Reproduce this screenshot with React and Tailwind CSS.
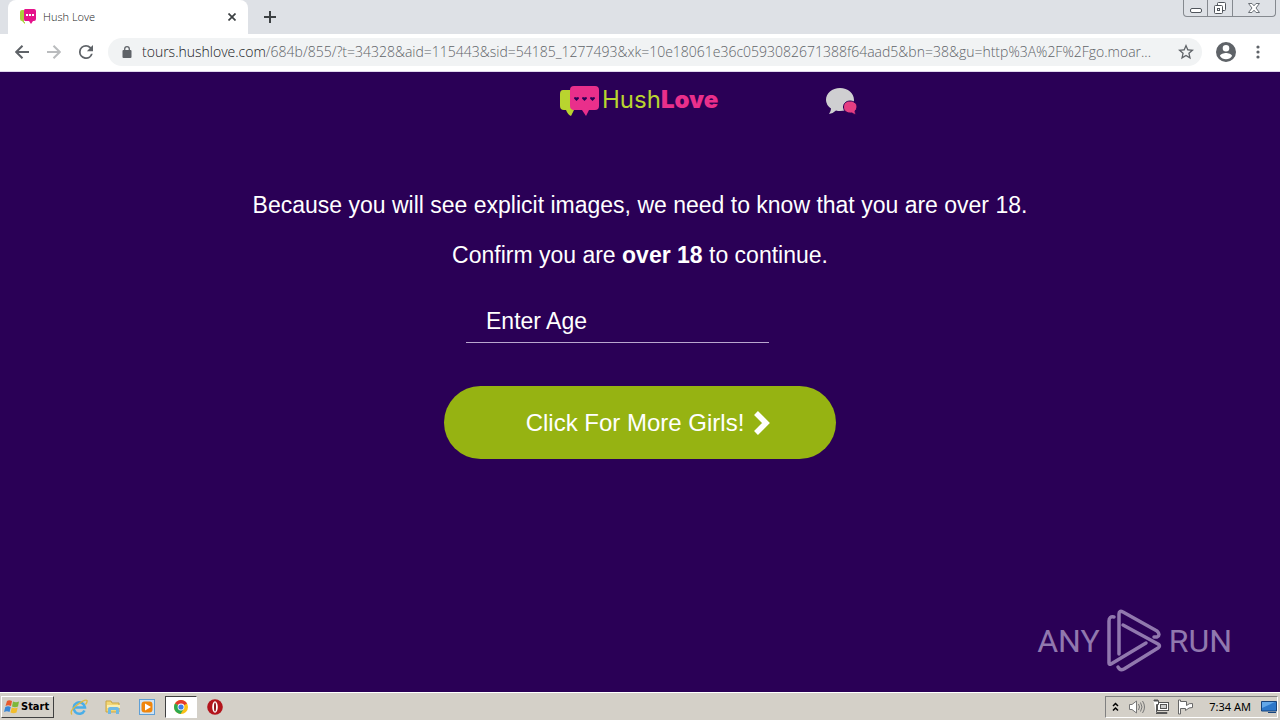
import { useState } from 'react';

const BubbleMark = ({ className }) => (
  <svg viewBox="0 0 40 31" className={className} aria-hidden="true">
    <path d="M3 4Q0 4 0 8V20Q0 24 4 24H6Q8 29 11 30L14 24V4Z" fill="#b9d42f" />
    <path
      d="M14 0H35Q39 0 39 4V20Q39 24 35 24H29L26 30L22 24H14Q10 24 10 20V4Q10 0 14 0Z"
      fill="#e92f8b"
    />
    <g fill="#2a0056">
      <path d="M16.500 15L14 12.500Q14 10 16.500 11.500Q19 10 19 12.500Z" />
      <path d="M24.500 15L22 12.500Q22 10 24.500 11.500Q27 10 27 12.500Z" />
      <path d="M32.500 15L30 12.500Q30 10 32.500 11.500Q35 10 35 12.500Z" />
    </g>
  </svg>
);

const TabMark = () => (
  <svg viewBox="0 0 16 16" className="w-4 h-4 shrink-0" aria-hidden="true">
    <path d="M2 1H4V13H5V15L2 12Q0 12 0 10V3Q0 1 2 1Z" fill="#a9cf3c" />
    <path d="M5 0H14Q16 0 16 2V10Q16 12 14 12H13L11 15L9 12H5Q4 12 4 10V2Q4 0 5 0Z" fill="#e5138b" />
    <path d="M6 5h2v2H6zM9 5h2v2H9zM12 5h2v2h-2z" fill="#fff" />
  </svg>
);

/* Browser window: tab strip and address bar */
const TabStrip = () => (
  <div className="flex items-start h-[34px] bg-[#dee1e6] pl-2">
    <div className="flex items-center w-60 h-[34px] rounded-t-lg bg-white pl-3 pr-2">
      <TabMark />
      <span className="flex-1 pl-[7px] font-['Open_Sans',sans-serif] text-[11px] leading-4 font-light text-[#202124]">
        Hush Love
      </span>
      <button type="button" aria-label="Close tab" className="p-1">
        <svg viewBox="0 0 8 8" className="w-2 h-2" stroke="#3c4043" strokeWidth="1.700">
          <path d="M0.500 0.500L7.500 7.500M7.500 0.500L0.500 7.500" />
        </svg>
      </button>
    </div>
    <button type="button" aria-label="New tab" className="ml-4 mt-[11px]">
      <svg viewBox="0 0 12 12" className="w-3 h-3" stroke="#3c4043" strokeWidth="2">
        <path d="M6 0V12M0 6H12" />
      </svg>
    </button>
    <div className="flex ml-auto mr-1 h-[17px] rounded-b border border-t-0 border-[#85898f] divide-x divide-[#85898f]">
      <button type="button" aria-label="Minimize" className="w-6 flex items-center justify-center">
        <svg viewBox="0 0 12 16" className="w-3 h-4" fill="#fff" stroke="#50555c">
          <rect x="0.500" y="8.500" width="11" height="4" rx="1.500" />
        </svg>
      </button>
      <button type="button" aria-label="Restore" className="w-[25px] flex items-center justify-center">
        <svg viewBox="0 0 14 14" className="w-3.5 h-3.5" fill="#fff" stroke="#50555c">
          <rect x="4.500" y="1.500" width="8" height="8" rx="1" />
          <rect x="1.500" y="4.500" width="8" height="8" rx="1" />
          <rect x="4.500" y="7.500" width="2" height="2" />
        </svg>
      </button>
      <button type="button" aria-label="Close" className="w-[42px] flex items-center justify-center">
        <svg viewBox="0 0 12 12" className="w-3 h-3" fill="#fff" stroke="#6b7077">
          <path d="M0.500 1.500H4L6 3.800L8 1.500H11.500L8 6L11.500 10.500H8L6 8.200L4 10.500H0.500L4 6Z" />
        </svg>
      </button>
    </div>
  </div>
);

const Toolbar = () => (
  <div className="flex items-center h-[38px] bg-white border-b border-[#e0d6ee] pl-[15px] pr-5 pb-px">
    <button type="button" aria-label="Back">
      <svg viewBox="0 0 14 14" className="w-3.5 h-3.5" fill="none" stroke="#5f6368" strokeWidth="2">
        <path d="M14 7H1.500M7.500 0.700L1.200 7L7.500 13.300" />
      </svg>
    </button>
    <button type="button" aria-label="Forward" className="ml-[18px]">
      <svg viewBox="0 0 14 14" className="w-3.5 h-3.5" fill="none" stroke="#babcbe" strokeWidth="2">
        <path d="M0 7H12.500M6.500 0.700L12.800 7L6.500 13.300" />
      </svg>
    </button>
    <button type="button" aria-label="Reload" className="ml-[18px]">
      <svg viewBox="4 4 16 16" className="w-3.5 h-3.5" fill="#5f6368">
        <path d="M17.650 6.350A7.960 7.960 0 0 0 12 4a8 8 0 1 0 7.730 10h-2.080A6 6 0 1 1 12 6c1.660 0 3.140.690 4.220 1.780L13 11h7V4z" />
      </svg>
    </button>
    <div className="flex flex-1 min-w-0 items-center h-7 ml-[15px] rounded-full bg-[#f1f3f4] pl-[14px] pr-2">
      <svg viewBox="0 0 10 12" className="w-2.5 h-3 shrink-0" aria-hidden="true">
        <rect x="0.500" y="4" width="9" height="8" rx="1" fill="#5f6368" />
        <path d="M2.700 5V3a2.300 2.300 0 0 1 4.600 0V5" fill="none" stroke="#5f6368" strokeWidth="1.300" />
      </svg>
      <p className="flex-1 min-w-0 ml-2.5 truncate font-['Open_Sans',sans-serif] text-sm leading-5 font-light text-[#5f6368]">
        <span className="text-[#202124]">tours.hushlove.com</span>
        /684b/855/?t=34328&amp;aid=115443&amp;sid=54185_1277493&amp;xk=10e18061e36c0593082671388f64aad5&amp;bn=38&amp;gu=http%3A%2F%2Fgo.moar...
      </p>
      <button type="button" aria-label="Bookmark">
        <svg viewBox="2 2 20 20" className="w-4 h-4" fill="#5f6368">
          <path d="M22 9.240l-7.190-.620L12 2 9.190 8.630 2 9.240l5.460 4.730L5.820 21 12 17.270 18.180 21l-1.630-7.030zM12 15.400l-3.760 2.270 1-4.280-3.320-2.880 4.380-.380L12 6.100l1.710 4.040 4.380.380-3.320 2.880 1 4.280z" />
        </svg>
      </button>
    </div>
    <button type="button" aria-label="Profile" className="ml-[14px]">
      <svg viewBox="2 2 20 20" className="w-5 h-5" fill="#5f6368">
        <path d="M12 2a10 10 0 1 0 0 20 10 10 0 0 0 0-20zm0 3a3.300 3.300 0 1 1 0 6.600A3.300 3.300 0 0 1 12 5zm0 14.200a7.200 7.200 0 0 1-6-3.220c.030-1.990 4-3.080 6-3.080s5.970 1.090 6 3.080a7.200 7.200 0 0 1-6 3.220z" />
      </svg>
    </button>
    <button type="button" aria-label="Menu" className="ml-5">
      <svg viewBox="0 0 4 14" className="w-1 h-3.5" fill="#5f6368">
        <circle cx="2" cy="2" r="1.600" />
        <circle cx="2" cy="7" r="1.600" />
        <circle cx="2" cy="12" r="1.600" />
      </svg>
    </button>
  </div>
);

/* Site content */
const SiteHeader = () => (
  <header className="grid grid-cols-[1fr_auto_1fr] items-center w-full max-w-[436px] mx-auto pt-3.5">
    <a href="#home" className="col-start-2 flex items-center w-40 h-[31px]" aria-label="HushLove">
      <BubbleMark className="w-10 h-[31px] shrink-0" />
      <span className="pl-0.5 pb-1 font-['Inter',sans-serif] text-2xl leading-6 whitespace-nowrap text-[#b9d42f]">
        Hush<strong className="font-black text-[#e92f8b]">Love</strong>
      </span>
    </a>
    <button type="button" aria-label="Messages" className="justify-self-end">
      <svg viewBox="0 0 32 28" className="w-8 h-7">
        <path
          d="M14 0C22 0 28 5 28 12C28 19 22 23 14 23Q12 23 10 22.500Q7 25.500 3 26Q5 23.500 5 20.500Q0 17 0 12C0 5 6 0 14 0Z"
          fill="#cfcfd1"
        />
        <path
          d="M24 13C28 13 31 15.500 31 19Q31 21.500 29 23Q29 25 30.500 26.500Q27.500 26.500 26 25C21 25.500 17.500 23 17.500 19C17.500 15.500 20 13 24 13Z"
          fill="#e53e82"
          stroke="#2a0056"
        />
      </svg>
    </button>
  </header>
);

const AgeForm = () => {
  const [age, setAge] = useState('');

  return (
    <form
      onSubmit={(e) => e.preventDefault()}
      className="flex flex-col items-start w-full max-w-[392px] mx-auto mt-[29px]"
    >
      <input
        type="text"
        inputMode="numeric"
        aria-label="Enter Age"
        placeholder="Enter Age"
        value={age}
        onChange={(e) => setAge(e.target.value)}
        className="w-[303px] h-11 ml-[22px] pt-0.5 pl-5 border-b border-[#b9a6cf] bg-transparent text-[23px] text-white placeholder:text-white outline-none"
      />
      <button
        type="submit"
        className="flex items-center justify-center gap-2.5 w-full h-[73px] mt-[43px] pl-4 rounded-full bg-[#96b312] text-2xl text-white"
      >
        Click For More Girls!
        <svg viewBox="0 0 16 24" className="w-4 h-6" fill="none" stroke="#fff" strokeWidth="5.500" aria-hidden="true">
          <path d="M2 2L12 12L2 22" />
        </svg>
      </button>
    </form>
  );
};

const Watermark = () => (
  <div className="absolute right-12 bottom-[18px] flex items-center gap-1.5 font-['Roboto',sans-serif] text-[32px] leading-none text-[#9178ae]">
    <span>ANY</span>
    <svg viewBox="0 0 57 66" className="w-[57px] h-[66px]" fill="none" stroke="#9178ae" strokeWidth="3.500" strokeLinejoin="round" strokeLinecap="round" aria-hidden="true">
      <path d="M8 9Q3 8 3 13V55Q3 57 5 56L40 35" />
      <path d="M13 46V6Q13 2 17 4L51 23Q55 27 51 29H48" />
      <path d="M17 17L52 36Q55 38 52 40L18 61Q14 63 12 59" />
    </svg>
    <span>RUN</span>
  </div>
);

/* Desktop taskbar */
const IeIcon = () => (
  <svg viewBox="0 0 18 18" className="w-[18px] h-[18px]" fill="none">
    <path d="M14.500 12.500A5.700 5.700 0 1 1 15 9.500H5" stroke="#4aaee8" strokeWidth="2.500" />
    <path d="M2 16.500Q-1 13 7 7T17 2.500Q17.500 4 15.500 6.500" stroke="#dfb93f" strokeWidth="1.300" />
  </svg>
);

const FolderIcon = () => (
  <svg viewBox="0 0 16 16" className="w-4 h-4">
    <path d="M1 2H6L7 4H14V13H1Z" fill="#f2d675" stroke="#c9a544" />
    <path d="M2 6H15V9H2Z" fill="#fbeeb0" />
    <path d="M3 15V10Q3 8 5 8H12Q14 8 14 10V15H11V11H6V15Z" fill="#6fb9e4" />
  </svg>
);

const PlayerIcon = () => (
  <svg viewBox="0 0 16 16" className="w-4 h-4">
    <rect x="0.500" y="0.500" width="15" height="15" fill="#cfe3f3" stroke="#5f9fd5" />
    <rect x="2.500" y="2.500" width="11" height="11" rx="3" fill="#f0860c" />
    <path d="M6 4.500L12 8L6 11.500Z" fill="#fff" />
  </svg>
);

const ChromeIcon = () => (
  <svg viewBox="0 0 14 14" className="w-3.5 h-3.5">
    <circle cx="7" cy="7" r="7" fill="#fbc116" />
    <path d="M7 7L1 3.500A7 7 0 0 1 13 3.500Z" fill="#e33b2e" />
    <path d="M7 7L1 3.500A7 7 0 0 0 6.500 14L10 8.500Z" fill="#2da94f" />
    <circle cx="7" cy="7" r="3.400" fill="#fff" />
    <circle cx="7" cy="7" r="2.600" fill="#3f7de8" />
  </svg>
);

const OperaIcon = () => (
  <svg viewBox="0 0 16 16" className="w-4 h-4">
    <circle cx="8" cy="8" r="7.800" fill="#b3141c" />
    <ellipse cx="8" cy="8" rx="2.800" ry="5.800" fill="#fff" />
    <ellipse cx="8" cy="8" rx="1" ry="4.500" fill="#8d1219" />
  </svg>
);

const Tray = () => (
  <div className="flex items-center h-[22px] ml-auto mr-px pl-1.5 border border-t-[#808080] border-l-[#808080] border-r-white border-b-white">
    <svg viewBox="0 0 7 10" className="w-[7px] h-2.5" fill="none" stroke="#000" strokeWidth="1.500" aria-hidden="true">
      <path d="M1 4L3.500 1.500L6 4M1 8.500L3.500 6L6 8.500" />
    </svg>
    <svg viewBox="0 0 17 14" className="w-[17px] h-3.5 ml-2.5" fill="#fff" stroke="#777" aria-hidden="true">
      <path d="M0.500 4.500H3L7.500 1V13L3 9.500H0.500Z" />
      <path d="M9.500 4Q11.500 7 9.500 10M11.500 2.500Q14.500 7 11.500 11.500M13.500 1Q17.500 7 13.500 13" fill="none" />
    </svg>
    <svg viewBox="0 0 16 16" className="w-4 h-4 ml-[7px]" fill="#fff" stroke="#555" aria-hidden="true">
      <rect x="4.500" y="3.500" width="11" height="8" />
      <rect x="7.500" y="5.500" width="6" height="4" fill="#ccc" />
      <path d="M0.500 1.500H5.500V5.500H3.500V13.500H14V14.500H3" />
      <path d="M2 0V3M4 0V3" />
    </svg>
    <svg viewBox="0 0 16 16" className="w-4 h-4 ml-2" fill="#fff" stroke="#666" aria-hidden="true">
      <path d="M1.500 1V15H3.500V9.500H8.500V11.500Q12 8 15.500 8.500V4.500Q12 4 9.500 6.500V2.500H3.500V1Z" />
    </svg>
    <time className="ml-4 text-[11px] leading-4 text-black">7:34 AM</time>
    <svg viewBox="0 0 16 14" className="w-4 h-3.5 ml-2.5" aria-hidden="true">
      <path d="M0.500 1.500H15.500V11H0.500Z" fill="#2c77c9" stroke="#17447c" />
      <path d="M1 2H14L1 8Z" fill="#62a7e8" />
      <path d="M7 12H15V13H7Z" fill="#17447c" />
    </svg>
  </div>
);

const Taskbar = () => (
  <footer className="flex items-center h-7 border-t border-white bg-[#d4d0c8] px-px">
    <button
      type="button"
      className="flex items-center gap-px w-[53px] h-[22px] pl-0.5 border border-t-white border-l-white border-r-[#404040] border-b-[#404040] text-[11px] leading-4 font-bold text-black font-['DejaVu_Sans_Condensed','DejaVu_Sans',sans-serif]"
    >
      <svg viewBox="0 0 16 16" className="w-4 h-4 shrink-0" aria-hidden="true">
        <path d="M3 2Q5 0.500 8 2L7 7Q4 5.500 1.500 7Z" fill="#e8592b" />
        <path d="M9 2.500Q12 4 15 2.500L14 7.500Q11 9 8 7.500Z" fill="#7db83a" />
        <path d="M1.300 8Q4 6.500 6.800 8L5.500 13Q3 11.500 0 13Z" fill="#3a87d6" />
        <path d="M7.800 8.500Q11 10 13.700 8.500L12.500 13.500Q9.500 15 6.500 13.500Z" fill="#f2bd2c" />
      </svg>
      Start
    </button>
    <nav aria-label="Pinned programs" className="flex items-center ml-2">
      <button type="button" aria-label="Internet Explorer" className="flex justify-center w-[34px]"><IeIcon /></button>
      <button type="button" aria-label="Explorer" className="flex justify-center w-[34px]"><FolderIcon /></button>
      <button type="button" aria-label="Media Player" className="flex justify-center w-[34px]"><PlayerIcon /></button>
      <button
        type="button"
        aria-label="Chrome"
        className="flex items-center justify-center w-8 h-[22px] mx-px border border-t-[#404040] border-l-[#404040] border-r-white border-b-white bg-white"
      >
        <ChromeIcon />
      </button>
      <button type="button" aria-label="Opera" className="flex justify-center w-[34px]"><OperaIcon /></button>
    </nav>
    <Tray />
  </footer>
);

export default function App() {
  return (
    <div className="flex flex-col min-h-screen font-['Noto_Sans',sans-serif]">
      <TabStrip />
      <Toolbar />
      <main className="relative flex-1 bg-[#2a0056] text-white font-['Liberation_Sans',sans-serif]">
        <SiteHeader />
        <div className="mt-[73px] text-center text-[23px] leading-[30px]">
          <p>Because you will see explicit images, we need to know that you are over 18.</p>
          <p className="mt-5">
            Confirm you are <strong>over 18</strong> to continue.
          </p>
        </div>
        <AgeForm />
        <Watermark />
      </main>
      <Taskbar />
    </div>
  );
}
